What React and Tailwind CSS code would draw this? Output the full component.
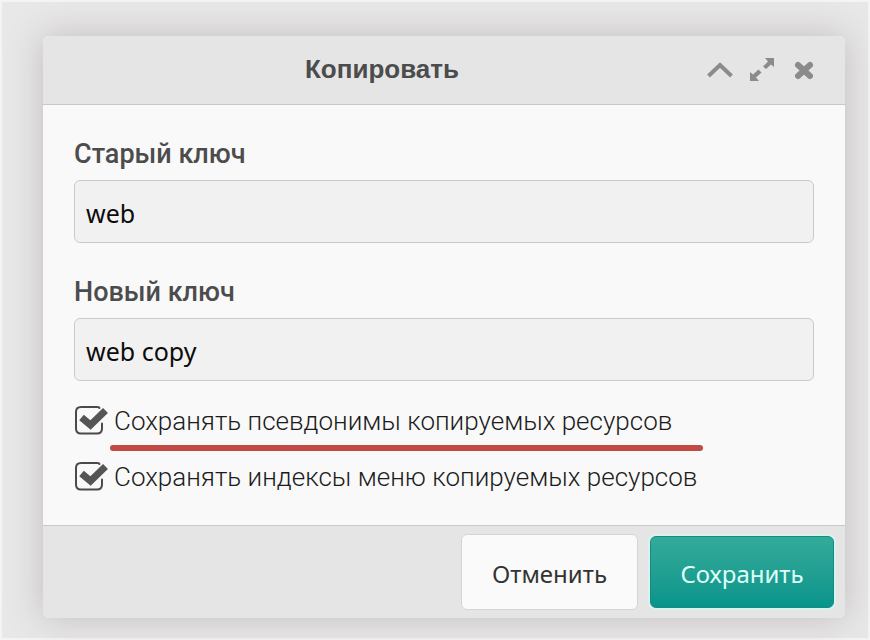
import React, { useState } from "react";

function IconButton({ label, children }) {
  return (
    <button type="button" aria-label={label} className="w-7 h-7 flex items-center justify-center text-[#8b8b8b]">
      {children}
    </button>
  );
}

function Field({ id, label, value, onChange }) {
  return (
    <div>
      <label
        htmlFor={id}
        className="block text-[27px] leading-8 font-medium text-[#4c4c4c] font-['Roboto',sans-serif]"
      >
        {label}
      </label>
      <input
        id={id}
        type="text"
        value={value}
        onChange={(e) => onChange(e.target.value)}
        className="block w-full h-[63px] mt-2.5 px-[11px] pt-0.5 rounded-md border border-[#cacaca] bg-[#f2f1f2] text-[25px] text-[#0c0c0c] font-['Noto_Sans',sans-serif] outline-none focus:border-[#32ab9a]"
      />
    </div>
  );
}

function CheckRow({ label, checked, onChange, underlined }) {
  return (
    <label className="relative flex items-center h-14 text-[26px] leading-8 font-light text-[#1c1c1c] font-['Roboto',sans-serif] whitespace-nowrap">
      <input type="checkbox" checked={checked} onChange={(e) => onChange(e.target.checked)} className="sr-only" />
      <svg width="36" height="32" viewBox="0 0 36 32" fill="none" className="shrink-0 mr-1" aria-hidden="true">
        <path
          d="M25.500 3C25 2.200 24 2 23 2H7C4 2 2 4 2 7V23.500C2 26.500 4 28.500 7 28.500H23C26 28.500 28 26.500 28 23.500V18.500"
          stroke="#4a4a4a"
          strokeWidth="2"
          strokeLinecap="round"
        />
        {checked && <path d="M7.500 12.500L16.500 20L31.500 5.500" stroke="#555" strokeWidth="7" />}
      </svg>
      <span>{label}</span>
      {underlined && <span className="absolute left-9 bottom-[-2px] w-[593px] h-1.5 rounded-full bg-[#c24a45]" />}
    </label>
  );
}

function App() {
  const [oldKey, setOldKey] = useState("web");
  const [newKey, setNewKey] = useState("web copy");
  const [keepAliases, setKeepAliases] = useState(true);
  const [keepIndexes, setKeepIndexes] = useState(true);

  return (
    <main className="min-h-screen pt-[34px] pb-4 pl-[41px] pr-[23px] bg-[#e9e8e9] border-2 border-[#f4f4f4]">
      <form
        onSubmit={(e) => e.preventDefault()}
        role="dialog"
        aria-labelledby="dialog-title"
        className="rounded-md bg-[#f9f9f9] shadow-[0_0_36px_rgba(70,60,65,0.25)] overflow-hidden"
      >
        <header className="flex items-center justify-end h-[69px] px-[27px] bg-[#e6e5e6] border-b border-[#c8c8c8]">
          <h1
            id="dialog-title"
            className="flex-1 pb-0.5 pr-3 text-center text-[26px] leading-8 font-bold text-[#4c4c4c] font-['Liberation_Sans',sans-serif]"
          >
            Копировать
          </h1>
          <div className="flex gap-3.5">
            <IconButton label="Свернуть">
              <svg width="28" height="28" viewBox="0 0 28 28" fill="none" stroke="currentColor" strokeWidth="4">
                <path d="M2.500 20L14 9L25.500 20" />
              </svg>
            </IconButton>
            <IconButton label="Развернуть">
              <svg width="28" height="28" viewBox="0 0 28 28" fill="currentColor">
                <path d="M17 2H26V11L23 8.500L18 13L15 10.500L20 5.500Z" />
                <path d="M2 16L5 18.500L10.500 13.500L13.500 16.500L8 21.500L11 25H2Z" />
              </svg>
            </IconButton>
            <IconButton label="Закрыть">
              <svg width="28" height="28" viewBox="0 0 28 28" stroke="currentColor" strokeWidth="6" strokeLinecap="round">
                <path d="M8 9L20 20M20 9L8 20" />
              </svg>
            </IconButton>
          </div>
        </header>

        <div className="pt-[33px] px-[31px] pb-5">
          <div className="flex flex-col gap-[33px]">
            <Field id="old-key" label="Старый ключ" value={oldKey} onChange={setOldKey} />
            <Field id="new-key" label="Новый ключ" value={newKey} onChange={setNewKey} />
          </div>
          <div className="mt-3">
            <CheckRow
              label="Сохранять псевдонимы копируемых ресурсов"
              checked={keepAliases}
              onChange={setKeepAliases}
              underlined
            />
            <CheckRow
              label="Сохранять индексы меню копируемых ресурсов"
              checked={keepIndexes}
              onChange={setKeepIndexes}
            />
          </div>
        </div>

        <footer className="flex items-center justify-end gap-3 pt-2 pr-[11px] pb-2 bg-[#e6e5e6] border-t border-[#c8c8c8] text-2xl font-['Noto_Sans',sans-serif]">
          <button
            type="button"
            className="w-[177px] h-[76px] pt-1 rounded-md border border-[#d5d5d5] bg-[#fafafa] text-[#333]"
          >
            Отменить
          </button>
          <button
            type="submit"
            className="w-[184px] h-[72px] pt-1 rounded-md border border-[#188b80] bg-gradient-to-b from-[#32ab9a] to-[#07948b] text-[#dffff9] ring-2 ring-[#d8f3ef]"
          >
            Сохранить
          </button>
        </footer>
      </form>
    </main>
  );
}

export default App;
